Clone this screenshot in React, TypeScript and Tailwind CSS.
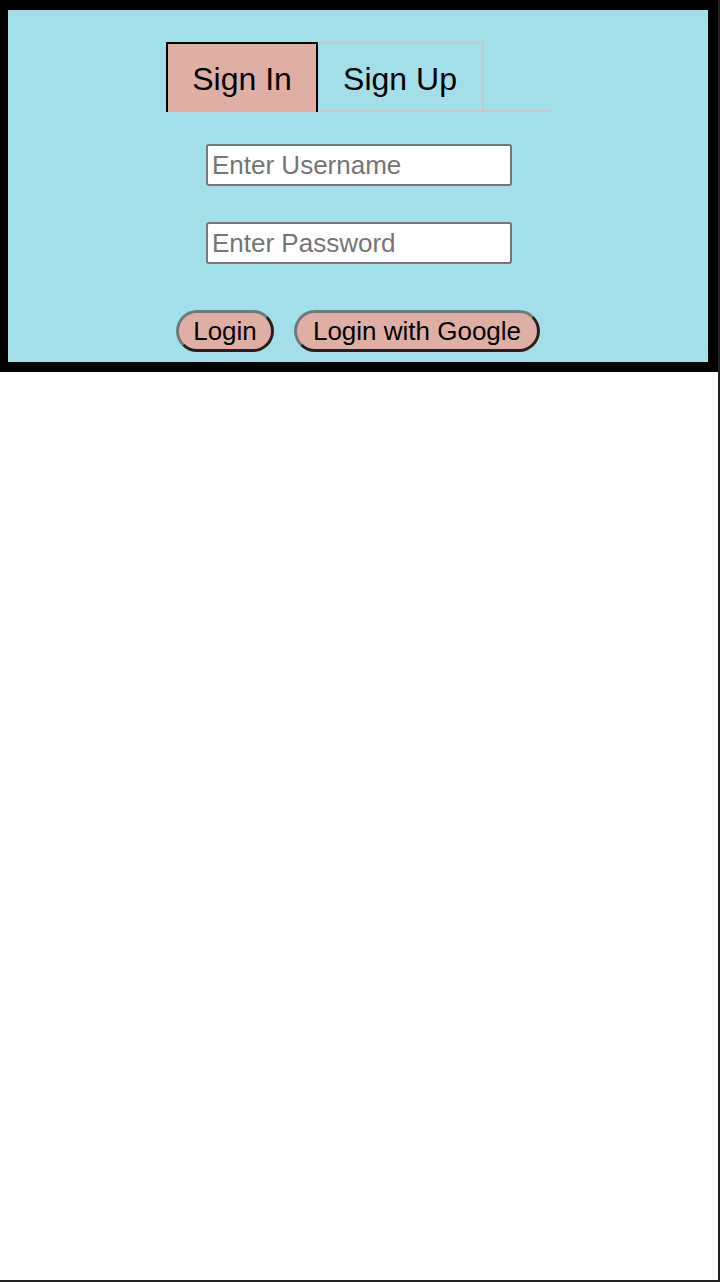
import React from "react";

export default function App() {
  const font = { fontFamily: '"Liberation Sans", Arial, sans-serif' };
  return (
    <div
      className="w-[720px] h-[1282px] border-r-2 border-b-2 border-[#222] bg-white"
      style={font}
    >
      <div className="w-[718px] bg-black pt-[10px] pb-[10px] pl-[8px] pr-[10px]">
        <div className="bg-[#a3dfe9] pt-[32px] pb-[10px] flex flex-col items-center">
          <div className="flex w-[384px] border-b-2 border-[#c8c8c8] h-[70px]">
            <div className="w-[152px] h-[70px] bg-[#dfafa6] border-2 border-b-0 border-black flex items-center justify-center text-[32px] text-black pt-[2px]">
              Sign In
            </div>
            <div className="w-[166px] h-[68px] border-t-2 border-r-2 border-[#c8c8c8] flex items-center justify-center text-[32px] text-black pt-[3px]">
              Sign Up
            </div>
          </div>
          <input
            className="mt-[32px] ml-[2px] w-[306px] h-[42px] bg-white border-2 border-[#767676] rounded-[3px] px-[4px] text-[26px] text-black placeholder:text-[#757575] outline-none"
            placeholder="Enter Username"
          />
          <input
            type="password"
            className="mt-[36px] ml-[2px] w-[306px] h-[42px] bg-white border-2 border-[#767676] rounded-[3px] px-[4px] text-[26px] text-black placeholder:text-[#757575] outline-none"
            placeholder="Enter Password"
          />
          <div className="mt-[46px] flex gap-[20px]">
            <button className="w-[98px] h-[42px] rounded-full bg-[#dfafa6] border-[3px] border-t-[#767676] border-l-[#767676] border-r-[#222] border-b-[#222] text-[26px] text-black flex items-center justify-center leading-none">
              Login
            </button>
            <button className="w-[246px] h-[42px] rounded-full bg-[#dfafa6] border-[3px] border-t-[#767676] border-l-[#767676] border-r-[#222] border-b-[#222] text-[26px] text-black flex items-center justify-center leading-none">
              Login with Google
            </button>
          </div>
        </div>
      </div>
    </div>
  );
}
